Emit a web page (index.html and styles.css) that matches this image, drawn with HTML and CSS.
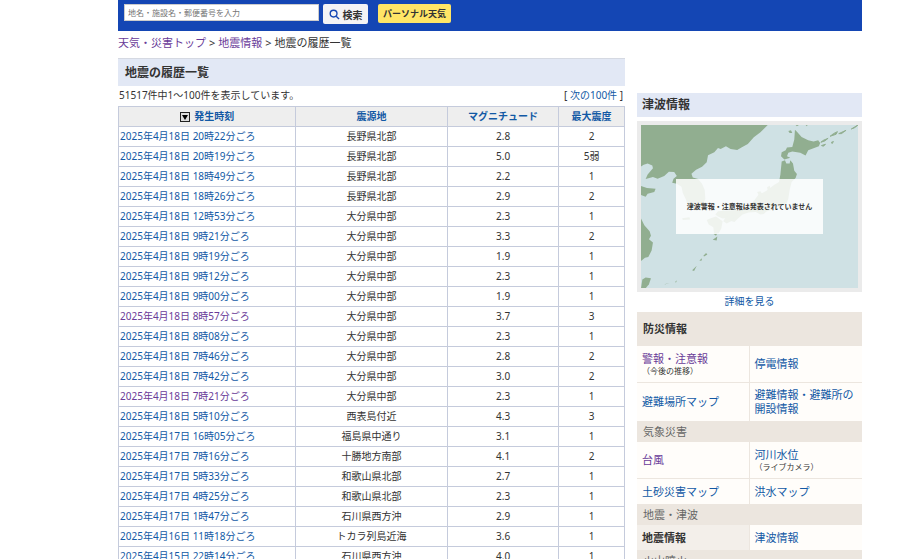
FILE: index.html
```html
<!DOCTYPE html>
<html lang="ja">

<head>
  <meta charset="UTF-8">
  <meta name="viewport" content="width=device-width, initial-scale=1.0">
  <title>地震の履歴一覧</title>
  <link rel="stylesheet" href="styles.css">
</head>

<body>
  <div class="page">
    <!-- Search bar -->
    <header>
      <form class="search">
        <input type="text" aria-label="地名・施設名・郵便番号を入力" placeholder="地名・施設名・郵便番号を入力">
        <button type="button" class="search-button">
          <svg viewBox="0 0 12 12" aria-hidden="true">
            <circle cx="5" cy="5" r="3.7" />
            <path d="M7.8 7.8L11 11" />
          </svg>
          検索
        </button>
      </form>
      <button type="button" class="personal-button">パーソナル天気</button>
    </header>

    <nav class="breadcrumb">
      <a href="#" class="visited">天気・災害トップ</a>
      <span>&gt;</span>
      <a href="#" class="visited">地震情報</a>
      <span>&gt;</span>
      <span>地震の履歴一覧</span>
    </nav>

    <div class="columns">
      <main>
        <h1>地震の履歴一覧</h1>
        <div class="pager">
          <span>51517件中1～100件を表示しています。</span>
          <span>[ <a href="#">次の100件</a> ]</span>
        </div>

        <table class="history">
          <thead>
            <tr>
              <th class="col-time">
                <svg class="sort" viewBox="0 0 10 10" aria-hidden="true">
                  <rect x="0.5" y="0.5" width="9" height="9" fill="#ddd" stroke="#222" />
                  <path d="M2 3H8L5 8Z" fill="#000" />
                </svg>
                <a href="#">発生時刻</a>
              </th>
              <th class="col-place"><a href="#">震源地</a></th>
              <th class="col-mag"><a href="#">マグニチュード</a></th>
              <th class="col-int"><a href="#">最大震度</a></th>
            </tr>
          </thead>
          <tbody>
            <tr><td><a href="#">2025年4月18日 20時22分ごろ</a></td><td>長野県北部</td><td>2.8</td><td>2</td></tr>
            <tr><td><a href="#">2025年4月18日 20時19分ごろ</a></td><td>長野県北部</td><td>5.0</td><td>5弱</td></tr>
            <tr><td><a href="#">2025年4月18日 18時49分ごろ</a></td><td>長野県北部</td><td>2.2</td><td>1</td></tr>
            <tr><td><a href="#">2025年4月18日 18時26分ごろ</a></td><td>長野県北部</td><td>2.9</td><td>2</td></tr>
            <tr><td><a href="#">2025年4月18日 12時53分ごろ</a></td><td>大分県中部</td><td>2.3</td><td>1</td></tr>
            <tr><td><a href="#">2025年4月18日 9時21分ごろ</a></td><td>大分県中部</td><td>3.3</td><td>2</td></tr>
            <tr><td><a href="#">2025年4月18日 9時19分ごろ</a></td><td>大分県中部</td><td>1.9</td><td>1</td></tr>
            <tr><td><a href="#">2025年4月18日 9時12分ごろ</a></td><td>大分県中部</td><td>2.3</td><td>1</td></tr>
            <tr><td><a href="#">2025年4月18日 9時00分ごろ</a></td><td>大分県中部</td><td>1.9</td><td>1</td></tr>
            <tr><td><a href="#" class="visited">2025年4月18日 8時57分ごろ</a></td><td>大分県中部</td><td>3.7</td><td>3</td></tr>
            <tr><td><a href="#">2025年4月18日 8時08分ごろ</a></td><td>大分県中部</td><td>2.3</td><td>1</td></tr>
            <tr><td><a href="#">2025年4月18日 7時46分ごろ</a></td><td>大分県中部</td><td>2.8</td><td>2</td></tr>
            <tr><td><a href="#">2025年4月18日 7時42分ごろ</a></td><td>大分県中部</td><td>3.0</td><td>2</td></tr>
            <tr><td><a href="#" class="visited">2025年4月18日 7時21分ごろ</a></td><td>大分県中部</td><td>2.3</td><td>1</td></tr>
            <tr><td><a href="#">2025年4月18日 5時10分ごろ</a></td><td>西表島付近</td><td>4.3</td><td>3</td></tr>
            <tr><td><a href="#">2025年4月17日 16時05分ごろ</a></td><td>福島県中通り</td><td>3.1</td><td>1</td></tr>
            <tr><td><a href="#">2025年4月17日 7時16分ごろ</a></td><td>十勝地方南部</td><td>4.1</td><td>2</td></tr>
            <tr><td><a href="#">2025年4月17日 5時33分ごろ</a></td><td>和歌山県北部</td><td>2.7</td><td>1</td></tr>
            <tr><td><a href="#">2025年4月17日 4時25分ごろ</a></td><td>和歌山県北部</td><td>2.3</td><td>1</td></tr>
            <tr><td><a href="#">2025年4月17日 1時47分ごろ</a></td><td>石川県西方沖</td><td>2.9</td><td>1</td></tr>
            <tr><td><a href="#">2025年4月16日 11時18分ごろ</a></td><td>トカラ列島近海</td><td>3.6</td><td>1</td></tr>
            <tr><td><a href="#">2025年4月15日 22時14分ごろ</a></td><td>石川県西方沖</td><td>4.0</td><td>1</td></tr>
          </tbody>
        </table>
      </main>

      <aside>
        <h2>津波情報</h2>
        <div class="map">
          <svg viewBox="0 0 654 492" aria-hidden="true">
            <rect width="654" height="492" fill="#cfe1e4" />
            <g fill="#91ae90">
              <!-- Continent and Korean peninsula -->
              <path d="M0 0H382L360 22L340 37L322 57L304 67L290 75L270 72L256 64L240 72L232 69L221 82L202 91L198 112L184 126L166 135L152 147L156 158L172 163L184 177L192 196L194 222L186 242L160 250L142 248L136 226L126 205L122 186L108 177L94 174L98 162L108 154L100 142L84 141L70 154L50 162L36 157L14 163L20 149L36 130L34 122L20 116L8 120L0 125Z" />
              <path d="M0 184L18 190L44 192L40 202L20 207L14 216L0 211Z" />
              <path d="M0 282L10 302L26 320L30 334L24 344L36 354L32 378L22 398L12 400L0 410Z" />
              <path d="M4 466L14 460L30 462L24 480L14 492L0 492Z" />
              <path d="M124 281L146 278L148 285L126 286Z" />
              <!-- Hokkaido -->
              <path d="M464 14L470 20L484 36L504 46L520 50L534 46L540 54L536 64L520 70L504 76L496 92L480 84L456 80L444 84L440 94L450 99L432 104L422 94L424 82L436 76L440 68L456 66L462 44Z" />
              <!-- Honshu -->
              <path d="M424 110L434 106L438 116L448 116L450 106L458 116L462 138L470 148L466 160L454 172L448 196L444 222L438 238L430 244L418 246L404 248L392 256L378 261L370 268L360 270L346 262L324 264L306 270L290 284L282 292L266 288L274 276L260 280L246 282L232 276L224 270L232 260L260 258L290 256L312 252L326 244L342 226L354 210L350 202L360 200L364 206L378 198L402 180L416 172L420 150Z" />
              <!-- Shikoku and Kyushu -->
              <path d="M256 276L280 271L276 288L258 297L248 290Z" />
              <path d="M208 282L226 276L246 290L242 312L234 326L220 326L218 308L204 300L198 286Z" />
              <!-- Small islands -->
              <path d="M380 188L388 183L390 192L382 198ZM218 328L230 326L226 334ZM216 346L230 336L228 348ZM188 394L196 386L200 390L190 396ZM176 410L182 402L184 408ZM154 438L168 424L160 440ZM102 474L108 468L106 474ZM70 480L86 476L74 480ZM444 18L452 16L456 24L448 24ZM466 0L476 0L470 4ZM496 0L502 0L500 4Z" />
              <path d="M542 52L550 46L564 40L554 48ZM544 62L556 58L550 64ZM570 34L580 26L592 20L588 28ZM574 52L580 50L576 56ZM596 26L618 16L604 26ZM634 12L654 0L644 8Z" stroke="#91ae90" stroke-width="3" />
            </g>
          </svg>
          <p class="map-message">津波警報・注意報は発表されていません</p>
        </div>
        <p class="more"><a href="#">詳細を見る</a></p>

        <h2 class="bousai-title">防災情報</h2>
        <div class="links">
          <div class="cell tall left"><a href="#" class="visited">警報・注意報</a><small>（今後の推移）</small></div>
          <div class="cell tall"><a href="#">停電情報</a></div>
          <div class="cell tall left"><a href="#">避難場所マップ</a></div>
          <div class="cell tall"><a href="#">避難情報・避難所の<br>開設情報</a></div>
          <h3>気象災害</h3>
          <div class="cell tall left"><a href="#" class="visited">台風</a></div>
          <div class="cell tall"><a href="#">河川水位</a><small>（ライブカメラ）</small></div>
          <div class="cell left"><a href="#">土砂災害マップ</a></div>
          <div class="cell"><a href="#">洪水マップ</a></div>
          <h3>地震・津波</h3>
          <div class="cell left current"><strong>地震情報</strong></div>
          <div class="cell"><a href="#">津波情報</a></div>
          <h3>火山噴火</h3>
        </div>
      </aside>
    </div>
  </div>
</body>

</html>
```
FILE: styles.css
```css
* {
  box-sizing: border-box;
}

body {
  margin: 0;
  height: 100vh;
  overflow: hidden;
  background-color: #fff;
  color: #333;
  font-family: "Noto Sans", "Noto Sans CJK JP", sans-serif;
  font-size: 10px;
  line-height: 14px;
}

a {
  color: #1259a5;
  text-decoration: none;
}

a.visited {
  color: #693b98;
}

h1,
h2,
h3,
p {
  margin: 0;
}

.page {
  padding: 0 58px 0 118px;
}

/* Search bar */
header {
  display: flex;
  align-items: flex-start;
  gap: 10px;
  height: 31px;
  padding: 4px 6px;
  background-color: #1446b4;
}

.search {
  display: flex;
  align-items: flex-start;
  gap: 4px;
}

.search input {
  width: 195px;
  height: 17px;
  padding: 0 3px;
  border: 1px solid #ccc;
  background-color: #fff;
  font-family: inherit;
  font-size: 8px;
}

.search input::placeholder {
  color: #757575;
}

button {
  border: none;
  border-radius: 2px;
  font-family: inherit;
  font-size: 10px;
  font-weight: bold;
  color: #333;
  cursor: pointer;
}

.search-button {
  display: flex;
  align-items: center;
  justify-content: center;
  gap: 3px;
  width: 45px;
  height: 20px;
  padding: 0;
  background-color: #f3f3f5;
}

.search-button svg {
  width: 11px;
  height: 11px;
  fill: none;
  stroke: #1446b4;
  stroke-width: 1.5;
}

.personal-button {
  height: 19px;
  padding: 0 5px;
  background-color: #ffe566;
  font-size: 9px;
  white-space: nowrap;
}

.breadcrumb {
  display: flex;
  gap: 3px;
  padding-top: 5px;
  font-size: 11px;
}

.columns {
  display: flex;
  align-items: flex-start;
  gap: 12px;
  padding-top: 8px;
}

main {
  flex: 1;
}

h1 {
  padding: 6px 7px;
  border-top: 1px solid #d5d9e2;
  background-color: #e2e8f5;
  font-size: 12px;
  line-height: 15px;
}

.pager {
  display: flex;
  justify-content: space-between;
  padding: 2px 2px 4px 1px;
}

/* Earthquake history */
.history {
  width: 100%;
  border-collapse: collapse;
  table-layout: fixed;
}

.history th,
.history td {
  height: 20px;
  padding: 0 1px 2px;
  border: 1px solid #c5cbdc;
  text-align: center;
  white-space: nowrap;
}

.history th {
  background-color: #eee;
}

.history td:first-child {
  text-align: left;
}

.col-time {
  width: 35%;
}

.col-place {
  width: 30%;
}

.col-mag {
  width: 22%;
}

.col-int {
  width: 13%;
}

.sort {
  width: 10px;
  height: 10px;
  margin-right: 2px;
  vertical-align: middle;
}

/* Sidebar */
aside {
  width: 225px;
  padding-top: 35px;
}

aside h2 {
  padding: 5px;
  background-color: #e2e8f5;
  font-size: 12px;
  line-height: 14px;
}

.map {
  position: relative;
  margin-top: 4px;
  border: 4px solid #ebebeb;
}

.map svg {
  display: block;
  width: 100%;
}

.map-message {
  position: absolute;
  top: 33%;
  left: 16%;
  width: 68%;
  height: 34%;
  display: flex;
  align-items: center;
  justify-content: center;
  background-color: rgba(255, 255, 255, 0.85);
  font-size: 7px;
  font-weight: bold;
  white-space: nowrap;
}

.more {
  padding: 2px 0 4px;
  text-align: center;
}

aside .bousai-title {
  padding: 10px 6px;
  background-color: #ece6df;
  font-size: 11px;
}

.links {
  display: grid;
  grid-template-columns: 1fr 1fr;
  font-size: 11px;
  line-height: 14px;
}

.cell {
  display: flex;
  flex-direction: column;
  justify-content: center;
  min-height: 26px;
  padding: 5px;
  border-bottom: 1px solid #ece6df;
  background-color: #fffdfa;
  white-space: nowrap;
}

.cell.left {
  border-right: 1px solid #ece6df;
}

.cell.tall {
  min-height: 37px;
}

.cell.current {
  background-color: #f3efea;
}

.cell small {
  font-size: 8px;
  line-height: 10px;
}

.links h3 {
  grid-column: span 2;
  padding: 3px 6px;
  background-color: #ece6df;
  color: #666;
  font-size: 11px;
  font-weight: normal;
}
```
